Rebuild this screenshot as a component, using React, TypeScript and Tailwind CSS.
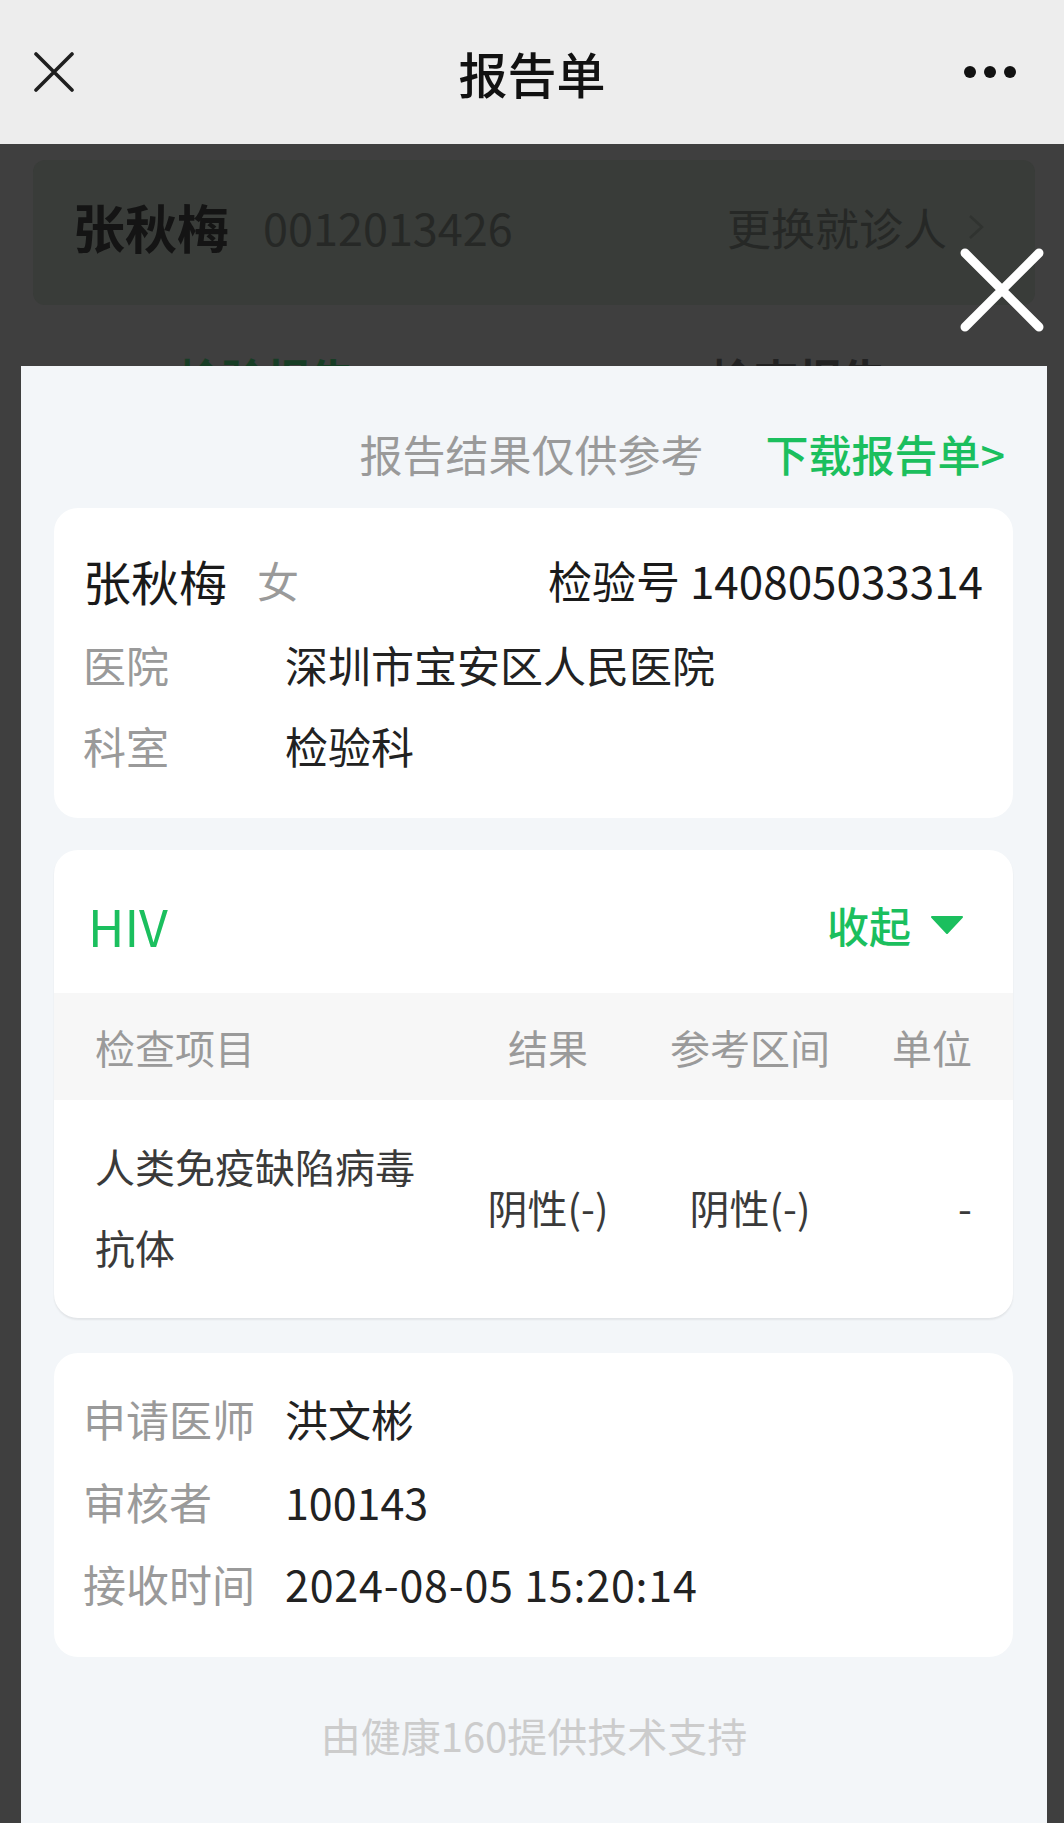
import React from "react";

const green = "text-[#1bbf5e]";

const InfoRow: React.FC<{ label: string; value: string; className?: string; valueClass?: string }> = ({
  label,
  value,
  className,
  valueClass,
}) => (
  <div className={`flex h-[56px] items-center ${className ?? ""}`}>
    <span className="w-[202px] shrink-0 text-[43px] text-[#9a9a9a]">{label}</span>
    <span className={`text-[43px] text-[#222222] ${valueClass ?? ""}`}>{value}</span>
  </div>
);

const App: React.FC = () => {
  return (
    <div className="relative h-[1823px] w-[1064px] overflow-hidden bg-[#3f3f3f] font-['Noto_Sans_CJK_SC',sans-serif] leading-none">
      {/* nav bar */}
      <div className="grid h-[144px] grid-cols-[1fr_auto_1fr] items-center bg-[#ededed]">
        <div className="pl-[34px]">
          <svg width="40" height="40" viewBox="0 0 40 40">
            <path d="M2 2 L38 38 M38 2 L2 38" stroke="#1f1f1f" strokeWidth="3.6" strokeLinecap="round" />
          </svg>
        </div>
        <div className="text-[49px] font-medium text-[#111111]">报告单</div>
        <div className="flex justify-end gap-[8px] pr-[48px]">
          <span className="h-[12px] w-[12px] rounded-full bg-[#111111]" />
          <span className="h-[12px] w-[12px] rounded-full bg-[#111111]" />
          <span className="h-[12px] w-[12px] rounded-full bg-[#111111]" />
        </div>
      </div>

      {/* page behind the mask */}
      <div className="pt-[16px]">
        <div className="ml-[33px] flex h-[145px] w-[1002px] items-center rounded-[12px] bg-[#393c39] pb-[12px] pl-[40px] pr-[50px]">
          <span className="text-[52px] font-bold text-[#141414]">张秋梅</span>
          <span className="ml-[34px] text-[45px] text-[#262826]">0012013426</span>
          <span className="ml-auto text-[44px] text-[#262826]">更换就诊人</span>
          <svg className="ml-[20px]" width="18" height="28" viewBox="0 0 18 28">
            <path d="M3 3 L15 14 L3 25" stroke="#303330" strokeWidth="2.5" fill="none" />
          </svg>
        </div>
        <div className="mt-[51px] grid grid-cols-2 text-center text-[44px] font-bold">
          <span className="text-[#173d25]">检验报告</span>
          <span className="text-[#222222]">检查报告</span>
        </div>
      </div>

      {/* close button */}
      <svg className="absolute left-[960px] top-[248px]" width="84" height="84" viewBox="0 0 84 84">
        <path d="M5 5 L79 79 M79 5 L5 79" stroke="#ffffff" strokeWidth="9" strokeLinecap="round" />
      </svg>

      {/* report sheet */}
      <div className="absolute bottom-0 left-[21px] top-[366px] w-[1026px] bg-[#f3f6f9]">
        <div className="mt-[64px] flex h-[46px] items-center justify-end gap-[62px] pr-[42px] text-[43px]">
          <span className="text-[#9a9a9a]">报告结果仅供参考</span>
          <span className={`font-medium ${green}`}>下载报告单&gt;</span>
        </div>

        <div className="ml-[33px] mr-[34px] mt-[32px] rounded-[24px] bg-white pb-[45px] pl-[29px] pr-[30px] pt-[44px]">
          <div className="flex h-[56px] items-center justify-between">
            <div className="flex items-center">
              <span className="text-[48px] text-[#1a1a1a]">张秋梅</span>
              <span className="ml-[30px] text-[42px] text-[#9a9a9a]">女</span>
            </div>
            <span className="text-[44px] text-[#1a1a1a]">检验号 140805033314</span>
          </div>
          <InfoRow label="医院" value="深圳市宝安区人民医院" className="mt-[28px]" />
          <InfoRow label="科室" value="检验科" className="mt-[25px]" />
        </div>

        <div className="ml-[33px] mr-[34px] mt-[32px] overflow-hidden rounded-[24px] bg-white shadow-[0_2px_2px_rgba(0,0,0,0.07)]">
          <div className="flex h-[143px] items-center justify-between pl-[34px] pr-[49px] pt-[7px]">
            <span className={`text-[50px] ${green}`}>HIV</span>
            <span className={`flex items-center text-[42px] font-medium ${green}`}>
              收起
              <svg className="ml-[19px]" width="34" height="20" viewBox="0 0 34 20">
                <path d="M2 2 H32 L17 18 Z" fill="#1bbf5e" stroke="#1bbf5e" strokeWidth="2" strokeLinejoin="round" />
              </svg>
            </span>
          </div>
          <div className="grid h-[107px] grid-cols-[345px_216px_188px_1fr] items-center bg-[#f7f7f7] px-[41px] text-[40px] text-[#9a9a9a]">
            <span>检查项目</span>
            <span className="text-center">结果</span>
            <span className="text-center">参考区间</span>
            <span className="text-right">单位</span>
          </div>
          <div className="grid grid-cols-[345px_216px_188px_1fr] items-center px-[41px] pb-[30px] pt-[26px] text-[40px] leading-[81px] text-[#3a3a3a]">
            <span>人类免疫缺陷病毒抗体</span>
            <span className="text-center">阴性(-)</span>
            <span className="text-center">阴性(-)</span>
            <span className="text-right">-</span>
          </div>
        </div>

        <div className="ml-[33px] mr-[34px] mt-[35px] rounded-[24px] bg-white pb-[46px] pl-[29px] pr-[30px] pt-[37px]">
          <InfoRow label="申请医师" value="洪文彬" />
          <InfoRow label="审核者" value="100143" className="mt-[27px]" />
          <InfoRow label="接收时间" value="2024-08-05 15:20:14" valueClass="tracking-[0.8px]" className="mt-[26px]" />
        </div>

        <div className="mt-[50px] text-center text-[40px] leading-[56px] text-[#cccccc]">由健康160提供技术支持</div>
      </div>
    </div>
  );
};

export default App;
